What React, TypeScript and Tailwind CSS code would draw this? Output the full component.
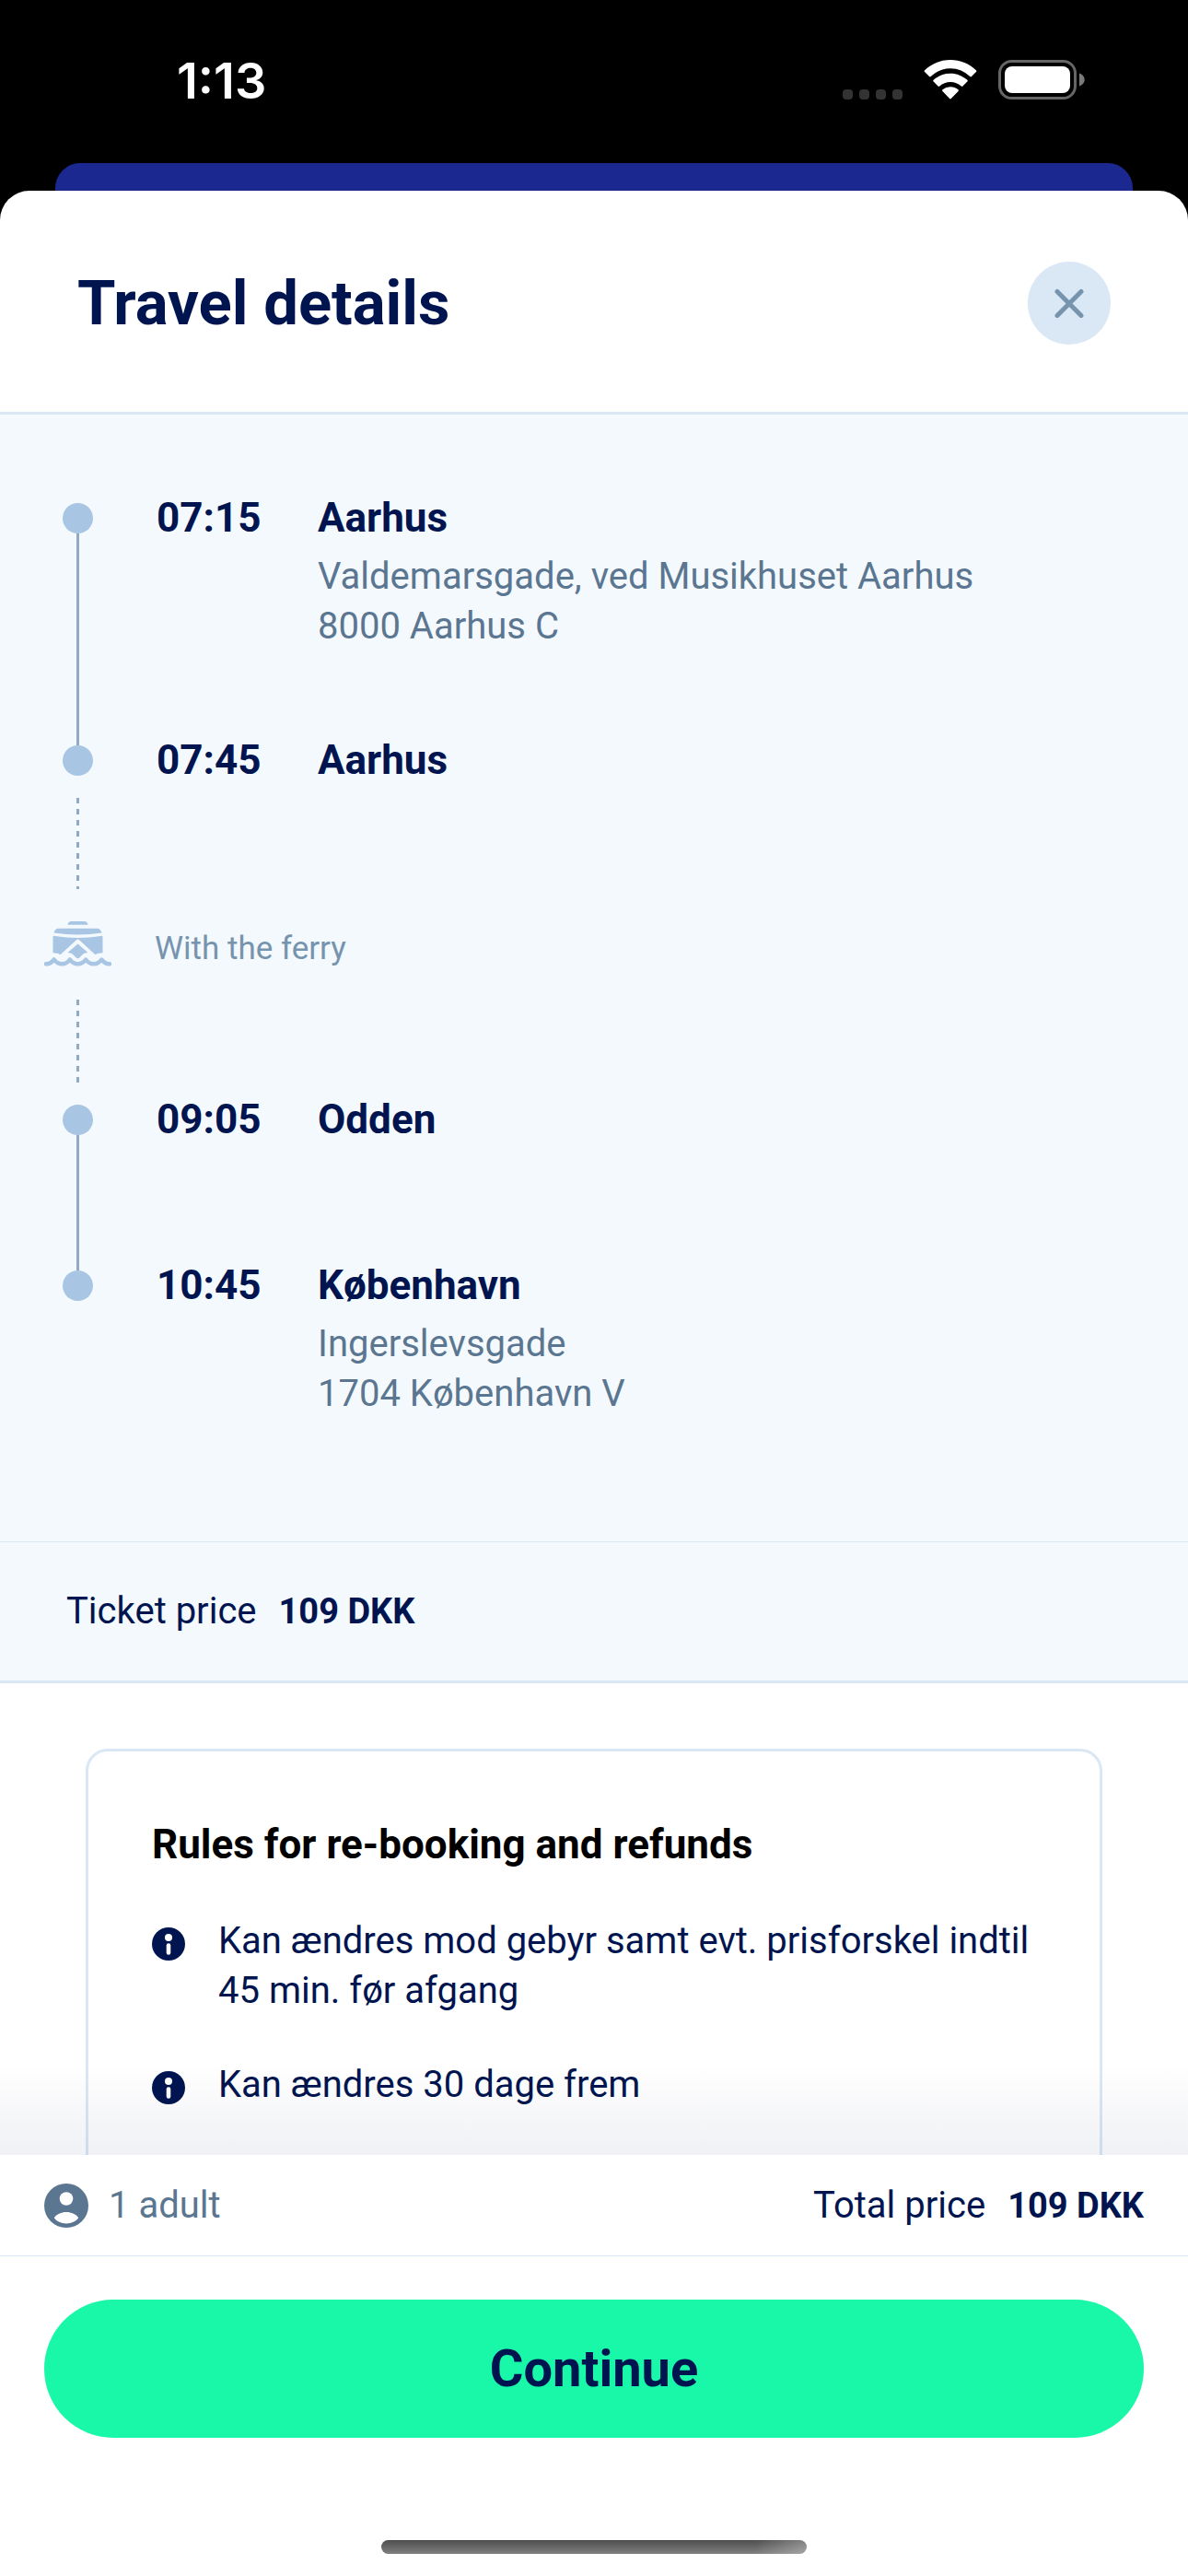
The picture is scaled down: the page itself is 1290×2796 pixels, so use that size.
import { useState } from "react";

const stops = [
  {
    time: "07:15",
    place: "Aarhus",
    address: ["Valdemarsgade, ved Musikhuset Aarhus", "8000 Aarhus C"],
  },
  { time: "07:45", place: "Aarhus", address: [] },
  { time: "09:05", place: "Odden", address: [] },
  {
    time: "10:45",
    place: "København",
    address: ["Ingerslevsgade", "1704 København V"],
  },
];

const rules = [
  "Kan ændres mod gebyr samt evt. prisforskel indtil 45 min. før afgang",
  "Kan ændres 30 dage frem",
];

type Stop = (typeof stops)[number];

/* =====================================
    ICONS
===================================== */
const WifiIcon = () => (
  <svg width="58" height="43" viewBox="0 0 58 43" fill="#fff">
    <path d="M29 0c10.800 0 20.600 4.200 27.900 11.300a1.200 1.200 0 0 1 0 1.800l-4.900 5a1.200 1.200 0 0 1-1.700 0A31 31 0 0 0 29 9.200 31 31 0 0 0 7.700 18.100a1.200 1.200 0 0 1-1.700 0l-4.900-5a1.200 1.200 0 0 1 0-1.800C8.400 4.200 18.200 0 29 0Z" />
    <path d="M29 14.700c7 0 13.400 2.700 18.300 7.100a1.200 1.200 0 0 1 0 1.800l-4.900 4.900a1.200 1.200 0 0 1-1.700 0A17.500 17.500 0 0 0 29 23.900a17.500 17.500 0 0 0-11.700 4.600 1.200 1.200 0 0 1-1.700 0l-4.900-4.900a1.200 1.200 0 0 1 0-1.800A27 27 0 0 1 29 14.700Z" />
    <path d="M29 29.200c3.200 0 6.200 1.200 8.500 3.100a1.200 1.200 0 0 1 0 1.800l-7.700 7.800a1.200 1.200 0 0 1-1.700 0l-7.600-7.800a1.200 1.200 0 0 1 0-1.800 13.300 13.300 0 0 1 8.500-3.100Z" />
  </svg>
);

const BatteryIcon = () => (
  <svg width="95" height="43" viewBox="0 0 95 43">
    <rect x="1.500" y="1.500" width="82" height="40" rx="13" fill="none" stroke="#666" strokeWidth="3" />
    <rect x="7" y="7" width="71" height="29" rx="8" fill="#fff" />
    <path d="M88 14.500c3.400 1.200 5.700 4 5.700 7s-2.300 5.800-5.700 7Z" fill="#7a7a7a" />
  </svg>
);

const FerryIcon = () => (
  <svg width="73" height="49" viewBox="0 0 73 49" fill="#a8c6e3">
    <path d="M29.500 0h14c2.200 0 3.800 1.700 4 3.700h-22c.2-2 1.800-3.700 4-3.700Z" />
    <path d="M15.500 7.700h42c2.600 0 4.500 2.100 5 4.900-8.500 1.300-17.200 1.900-26 1.900s-17.500-.6-26-1.900c.5-2.800 2.400-4.900 5-4.900Z" />
    <path d="M9.500 17c0-.8.600-1.300 1.400-1.200 8.500 1.400 17 2.100 25.600 2.100s17.100-.7 25.600-2.100c.8-.1 1.400.4 1.400 1.200v17.300l-3.200.2a9 9 0 0 0-4.800 1.700L37.800 20.100a2 2 0 0 0-2.600 0L17.500 36.200a9 9 0 0 0-4.800-1.700l-3.200-.2Z" />
    <path d="M36.500 24.500 47.500 34c-3 .1-5 1-6.500 2.700l-2.500 2.500a2.800 2.800 0 0 1-4 0L32 36.700c-1.500-1.700-3.500-2.600-6.500-2.700Z" />
    <path
      d="M2 46.300c4 .2 6.200-1.600 8.700-4.800 4.400 6.400 12.600 6.400 17.200 0 4.400 6.400 12.800 6.400 17.200 0 4.600 6.400 12.800 6.400 17.200 0 2.500 3.200 4.700 5 8.700 4.800"
      fill="none"
      stroke="#a8c6e3"
      strokeWidth="4.500"
      strokeLinecap="round"
      strokeLinejoin="round"
    />
  </svg>
);

const InfoIcon = () => (
  <svg width="36" height="36" viewBox="0 0 36 36" className="mt-3 shrink-0">
    <circle cx="18" cy="18" r="18" fill="#00154f" />
    <circle cx="18" cy="11" r="4" fill="#fff" />
    <rect x="15.700" y="17.200" width="4.600" height="12.600" rx="2.300" fill="#fff" />
  </svg>
);

const PersonIcon = () => (
  <svg width="48" height="48" viewBox="0 0 48 48">
    <circle cx="24" cy="24" r="24" fill="#5b7690" />
    <circle cx="24" cy="16.500" r="7.300" fill="#fff" />
    <path d="M24 31c5.600 0 10.400 2.300 13.200 6.200-3 4-7.800 6.200-13.200 6.200s-10.200-2.200-13.200-6.200C13.600 33.300 18.400 31 24 31Z" fill="#fff" />
  </svg>
);

/* =====================================
    TIMELINE
===================================== */
const StopRow = ({ stop, connected, className }: { stop: Stop; connected?: boolean; className?: string }) => (
  <li className={`flex ${className ?? ""}`}>
    <div className="w-[73px] shrink-0 flex flex-col items-center">
      <span className="w-[33px] h-[33px] rounded-full bg-[#a8c6e3]" />
      {connected && <span className="w-[3px] flex-1 bg-[#8faac7]" />}
    </div>

    <p className="ml-[49px] w-[175px] shrink-0 text-[44px] leading-8 font-bold text-[#00154f]">
      {stop.time}
    </p>

    <div>
      <h2 className="text-[44px] leading-8 font-bold text-[#00154f]">
        {stop.place}
      </h2>

      {stop.address.length > 0 && (
        <p className="mt-[21px] text-[40px] leading-[54px] text-[#5b7690]">
          {stop.address.map((line) => (
            <span key={line} className="block">
              {line}
            </span>
          ))}
        </p>
      )}
    </div>
  </li>
);

const dashes =
  "block w-[3px] mx-[35px] bg-[repeating-linear-gradient(to_bottom,#8faac7_0_6px,transparent_6px_12px)]";

const FerryLeg = () => (
  <li className="py-6">
    <span className={`${dashes} h-[99px]`} />
    <div className="flex mt-[35px] mb-[25px] h-[60px]">
      <FerryIcon />
      <p className="ml-[47px] text-[35px] leading-[60px] text-[#7794ae]">
        With the ferry
      </p>
    </div>
    <span className={`${dashes} h-[90px]`} />
  </li>
);

const App = () => {
  const [open, setOpen] = useState(true);

  return (
    <div className="h-screen flex flex-col bg-black font-['Roboto',sans-serif]">
      {/* STATUS BAR */}
      <div className="h-[177px] shrink-0 flex items-start justify-between pt-[65px] pl-[192px] pr-[111px]">
        <span className="font-['Inter',sans-serif] font-semibold text-[54px] leading-[45px] text-white">
          1:13
        </span>

        <div className="flex items-end gap-[23px]">
          <div className="flex gap-[7px]">
            {[1, 2, 3, 4].map((dot) => (
              <span key={dot} className="w-[11px] h-[11px] rounded-[4px] bg-[#333]" />
            ))}
          </div>
          <WifiIcon />
          <BatteryIcon />
        </div>
      </div>

      {/* SCREEN BEHIND */}
      <div className="h-[30px] shrink-0 mx-[60px] rounded-t-[27px] bg-[#1a2890]" />

      {/* SHEET */}
      {open && (
        <div className="flex-1 min-h-0 flex flex-col rounded-t-[32px] bg-white overflow-hidden">
          <header className="shrink-0 flex items-center justify-between pt-[77px] pb-[73px] px-[84px] border-b-3 border-[#dae7f4]">
            <h1 className="text-[67px] leading-[90px] font-bold text-[#00154f]">
              Travel details
            </h1>

            <button
              className="w-[90px] h-[90px] rounded-full bg-[#dae7f4] flex items-center justify-center cursor-pointer"
              aria-label="Close"
              onClick={() => setOpen(false)}
            >
              <svg width="32" height="32" viewBox="0 0 32 32" stroke="#7794ae" strokeWidth="5" strokeLinecap="round">
                <path d="M3 3.500l26 26M29 3.500L3 29.500" />
              </svg>
            </button>
          </header>

          <main className="flex-1 min-h-0 overflow-y-auto [scrollbar-width:none]">
            {/* ROUTE */}
            <ol className="bg-[#f4f9fe] pt-24 pb-[133px] px-12">
              <StopRow stop={stops[0]} connected className="min-h-[263px]" />
              <StopRow stop={stops[1]} />
              <FerryLeg />
              <StopRow stop={stops[2]} connected className="min-h-[180px]" />
              <StopRow stop={stops[3]} />
            </ol>

            {/* TICKET PRICE */}
            <div className="flex gap-6 px-[72px] py-12 bg-[#f4f9fe] border-t border-b-3 border-[#dae7f4] text-[40px] leading-[54px] text-[#00154f]">
              <span>Ticket price</span>
              <span className="text-[38px] font-bold">109 DKK</span>
            </div>

            {/* RULES */}
            <div className="px-[93px] py-[71px]">
              <div className="px-[69px] py-[74px] border-3 border-[#dae7f4] rounded-[24px]">
                <h2 className="text-[44px] leading-[54px] font-bold text-black">
                  Rules for re-booking and refunds
                </h2>

                <ul className="mt-[51px] flex flex-col gap-12">
                  {rules.map((rule) => (
                    <li key={rule} className="flex gap-9 text-[40px] leading-[54px] text-[#00154f]">
                      <InfoIcon />
                      <span>{rule}</span>
                    </li>
                  ))}
                </ul>
              </div>
            </div>
          </main>

          <footer className="relative shrink-0 bg-white">
            <div className="absolute bottom-full inset-x-0 h-[100px] bg-linear-to-t from-[#00154f]/6 to-transparent pointer-events-none" />

            <div className="flex items-center justify-between px-12 h-[110px] border-b border-[#dae7f4] text-[40px] leading-[54px]">
              <div className="flex items-center gap-[22px] text-[#5b7690]">
                <PersonIcon />
                <span>1 adult</span>
              </div>

              <div className="flex gap-6 text-[#00154f]">
                <span>Total price</span>
                <span className="text-[38px] font-bold">109 DKK</span>
              </div>
            </div>

            <div className="px-12 pt-[47px]">
              <button className="w-full h-[150px] rounded-full bg-[#18f8a8] text-[56px] font-bold text-[#00154f] cursor-pointer">
                Continue
              </button>
            </div>

            <div className="mx-auto mt-[111px] mb-6 w-[462px] h-[15px] rounded-full bg-[linear-gradient(to_right,transparent_88%,rgba(255,255,255,0.3)),linear-gradient(to_bottom,#4e4e4e,#808080)]" />
          </footer>
        </div>
      )}
    </div>
  );
};

export default App;
